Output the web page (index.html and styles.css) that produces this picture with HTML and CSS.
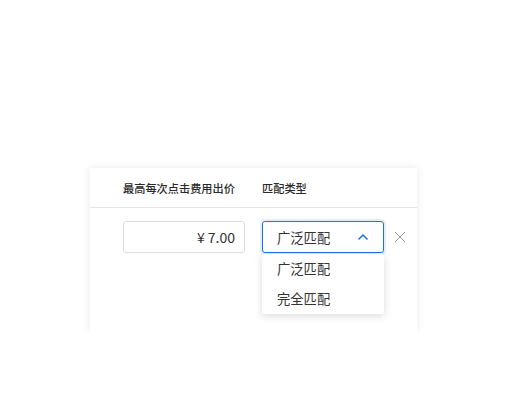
FILE: index.html
```html
<!DOCTYPE html>
<html>
<head>
<meta charset="utf-8">
<link rel="stylesheet" href="styles.css">
</head>
<body>
<div class="page">
  <div class="card">
    <div class="head">
      <div class="col col1">最高每次点击费用出价</div>
      <div class="col col2">匹配类型</div>
    </div>
    <div class="body">
      <div class="row">
        <div class="col col1">
          <div class="input">¥ 7.00</div>
        </div>
        <div class="col col2">
          <div class="select">
            <span>广泛匹配</span>
            <svg class="chev" width="12" height="8" viewBox="0 0 12 8"><path d="M1.5 6.5 L6 2 L10.5 6.5" fill="none" stroke="#1a73e8" stroke-width="1.5"/></svg>
            <div class="menu">
              <div class="item">广泛匹配</div>
              <div class="item">完全匹配</div>
            </div>
          </div>
          <svg class="close" width="12" height="12" viewBox="0 0 12 12"><path d="M1 1 L11 11 M11 1 L1 11" fill="none" stroke="#9a9a9a" stroke-width="1"/></svg>
        </div>
      </div>
    </div>
  </div>
</div>
</body>
</html>
```
FILE: styles.css
```css
html, body {
  margin: 0;
  background: #fff;
}
body {
  font-family: "Noto Sans CJK SC", "Noto Sans", "Liberation Sans", sans-serif;
  color: #333;
}
.page {
  padding: 168px 0 0 90px;
}
.card {
  width: 327px;
  height: 164px;
  background: #fff;
  box-shadow: 0 0 8px rgba(0, 0, 0, 0.09);
  box-sizing: border-box;
}
.head {
  display: flex;
  align-items: center;
  height: 39px;
  border-bottom: 1px solid #e4e4e4;
  padding-left: 33px;
  font-size: 11.2px;
  font-weight: 500;
  color: #2a2a2a;
}
.col1 {
  width: 139px;
}
.col2 {
  display: flex;
  align-items: center;
}
.body {
  padding: 13px 0 0 33px;
}
.row {
  display: flex;
}
.input {
  box-sizing: border-box;
  width: 122px;
  height: 32px;
  border: 1px solid #dcdcdc;
  border-radius: 3px;
  text-align: right;
  padding-right: 9px;
  font-size: 14px;
  line-height: 30px;
  color: #333;
}
.select {
  position: relative;
  box-sizing: border-box;
  width: 122px;
  height: 32px;
  border: 1px solid #1a73e8;
  border-radius: 3px;
  box-shadow: 0 0 0 2px rgba(26, 115, 232, 0.12);
  display: flex;
  align-items: center;
  justify-content: space-between;
  padding: 0 14px 0 14px;
  font-size: 13.3px;
  color: #333;
}
.chev {
  display: block;
}
.menu {
  position: absolute;
  left: -1px;
  top: 32px;
  width: 122px;
  background: #fff;
  border-radius: 3px;
  box-shadow: 0 2px 8px rgba(0, 0, 0, 0.15);
  z-index: 2;
}
.item {
  height: 30px;
  line-height: 30px;
  padding-left: 15px;
  font-size: 13.3px;
  color: #333;
}
.close {
  display: block;
  margin-left: 10px;
}
```
